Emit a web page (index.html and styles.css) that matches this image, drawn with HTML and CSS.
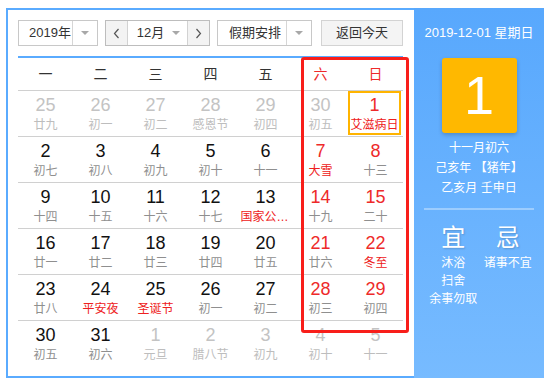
FILE: index.html
```html
<!DOCTYPE html>
<html lang="zh-CN">
<head>
<meta charset="utf-8">
<title>万年历</title>
<link rel="stylesheet" href="styles.css">
</head>
<body>
<div class="cal">
  <div class="main">
    <div class="toolbar">
      <div class="select year"><span class="sel-text">2019年</span><span class="sel-arrow"><i class="tri"></i></span></div>
      <div class="month-group">
        <span class="nav"><svg width="7" height="11" viewBox="0 0 7 11"><polyline points="5.5,1 1.5,5.5 5.5,10" fill="none" stroke="#555" stroke-width="1.2"/></svg></span>
        <span class="month"><span>12月</span><i class="tri"></i></span>
        <span class="nav next"><svg width="7" height="11" viewBox="0 0 7 11"><polyline points="1.5,1 5.5,5.5 1.5,10" fill="none" stroke="#555" stroke-width="1.2"/></svg></span>
      </div>
      <div class="select holiday"><span class="sel-text">假期安排</span><span class="sel-arrow"><i class="tri"></i></span></div>
      <button class="today">返回今天</button>
    </div>
    <div class="grid">
      <div class="head">
        <span>一</span><span>二</span><span>三</span><span>四</span><span>五</span><span class="red">六</span><span class="red">日</span>
      </div>
      <div class="week">
        <div class="day other"><b>25</b><em>廿九</em></div>
        <div class="day other"><b>26</b><em>初一</em></div>
        <div class="day other"><b>27</b><em>初二</em></div>
        <div class="day other"><b>28</b><em>感恩节</em></div>
        <div class="day other"><b>29</b><em>初四</em></div>
        <div class="day other"><b>30</b><em>初五</em></div>
        <div class="day we sel"><b>1</b><em class="fest">艾滋病日</em></div>
      </div>
      <div class="week">
        <div class="day"><b>2</b><em>初七</em></div>
        <div class="day"><b>3</b><em>初八</em></div>
        <div class="day"><b>4</b><em>初九</em></div>
        <div class="day"><b>5</b><em>初十</em></div>
        <div class="day"><b>6</b><em>十一</em></div>
        <div class="day we"><b>7</b><em class="fest">大雪</em></div>
        <div class="day we"><b>8</b><em>十三</em></div>
      </div>
      <div class="week">
        <div class="day"><b>9</b><em>十四</em></div>
        <div class="day"><b>10</b><em>十五</em></div>
        <div class="day"><b>11</b><em>十六</em></div>
        <div class="day"><b>12</b><em>十七</em></div>
        <div class="day"><b>13</b><em class="fest">国家公祭日</em></div>
        <div class="day we"><b>14</b><em>十九</em></div>
        <div class="day we"><b>15</b><em>二十</em></div>
      </div>
      <div class="week">
        <div class="day"><b>16</b><em>廿一</em></div>
        <div class="day"><b>17</b><em>廿二</em></div>
        <div class="day"><b>18</b><em>廿三</em></div>
        <div class="day"><b>19</b><em>廿四</em></div>
        <div class="day"><b>20</b><em>廿五</em></div>
        <div class="day we"><b>21</b><em>廿六</em></div>
        <div class="day we"><b>22</b><em class="fest">冬至</em></div>
      </div>
      <div class="week">
        <div class="day"><b>23</b><em>廿八</em></div>
        <div class="day"><b>24</b><em class="fest">平安夜</em></div>
        <div class="day"><b>25</b><em class="fest">圣诞节</em></div>
        <div class="day"><b>26</b><em>初一</em></div>
        <div class="day"><b>27</b><em>初二</em></div>
        <div class="day we"><b>28</b><em>初三</em></div>
        <div class="day we"><b>29</b><em>初四</em></div>
      </div>
      <div class="week">
        <div class="day"><b>30</b><em>初五</em></div>
        <div class="day"><b>31</b><em>初六</em></div>
        <div class="day other"><b>1</b><em>元旦</em></div>
        <div class="day other"><b>2</b><em>腊八节</em></div>
        <div class="day other"><b>3</b><em>初九</em></div>
        <div class="day other"><b>4</b><em>初十</em></div>
        <div class="day other"><b>5</b><em>十一</em></div>
      </div>
    </div>
    <div class="mark"></div>
  </div>
  <div class="side">
    <div class="date">2019-12-01 星期日</div>
    <div class="big">1</div>
    <div class="lunar">
      <div>十一月初六</div>
      <div>己亥年 【猪年】</div>
      <div>乙亥月 壬申日</div>
    </div>
    <div class="divider"></div>
    <div class="yiji">
      <div class="col">
        <div class="title">宜</div>
        <div>沐浴</div>
        <div>扫舍</div>
        <div class="nowrap">余事勿取</div>
      </div>
      <div class="col">
        <div class="title">忌</div>
        <div class="nowrap">诸事不宜</div>
      </div>
    </div>
  </div>
</div>
</body>
</html>
```

FILE: styles.css
```css
* { box-sizing: border-box; }
html, body { margin: 0; padding: 0; background: #fff; }
body {
  font-family: "Liberation Sans", "Noto Sans CJK SC", sans-serif;
  color: #333;
}
.cal {
  display: flex;
  margin: 8px 0 0 6px;
  width: 538px;
  height: 370px;
}
.main {
  position: relative;
  width: 408px;
  border: 2px solid #5aabff;
  border-right: 0;
  padding: 10px 11px 10px 10px;
  background: #fff;
}
.toolbar {
  display: flex;
  height: 26px;
  font-size: 13px;
  line-height: 24px;
}
.select {
  display: flex;
  border: 1px solid #c8c8c8;
  background: #fff;
}
.year { width: 80px; margin-right: 7px; }
.holiday { width: 95px; margin-right: 9px; }
.sel-text { flex: 1; padding-left: 10px; white-space: nowrap; }
.holiday .sel-text { padding-left: 11px; }
.sel-arrow {
  width: 25px;
  border-left: 1px solid #d6d6d6;
  display: flex;
  align-items: center;
  justify-content: center;
}
.tri {
  display: inline-block;
  width: 0; height: 0;
  border-left: 4px solid transparent;
  border-right: 4px solid transparent;
  border-top: 4px solid #a8a8a8;
}
.month-group {
  display: flex;
  width: 105px;
  margin-right: 7px;
  border: 1px solid #bdbdbd;
}
.nav {
  width: 22px;
  background: #f3f3f3;
  border-right: 1px solid #d2d2d2;
  display: flex;
  align-items: center;
  justify-content: center;
}
.nav.next { border-right: 0; border-left: 1px solid #d2d2d2; }
.month {
  flex: 1;
  display: flex;
  align-items: center;
  justify-content: center;
  gap: 8px;
  padding-left: 2px;
}
.today {
  width: 82px;
  height: 26px;
  padding: 0;
  border: 1px solid #d3d3d3;
  background: #f4f4f4;
  font: inherit;
  color: #333;
  line-height: 24px;
}
.grid {
  margin-top: 10px;
  border-top: 2px solid #5aabff;
}
.head {
  display: grid;
  grid-template-columns: repeat(7, 55px);
  height: 32px;
  line-height: 32px;
  font-size: 14px;
  text-align: center;
  color: #333;
}
.red { color: #ee2a2a; }
.week {
  display: grid;
  grid-template-columns: repeat(7, 55px);
  height: 46px;
  border-top: 1px solid #d0d0d0;
}
.day {
  display: flex;
  flex-direction: column;
  align-items: center;
  padding-top: 4px;
  overflow: hidden;
}
.day b {
  font-weight: normal;
  font-size: 18px;
  line-height: 20px;
  color: #111;
}
.day em {
  font-style: normal;
  font-size: 12px;
  line-height: 16px;
  margin-top: 2px;
  color: #8f8f8f;
  max-width: 50px;
  white-space: nowrap;
  overflow: hidden;
  text-overflow: ellipsis;
}
.day.we b { color: #ee2a2a; }
.day em.fest { color: #ee2020; }
.day.other b { color: #c3c3c3; }
.day.other em { color: #bdbdbd; }
.day.sel {
  border: 2px solid #ffb400;
  margin: 0 2px 1px 0;
  padding-top: 2px;
}
.mark {
  position: absolute;
  left: 293px;
  top: 47px;
  width: 108px;
  height: 276px;
  border: 3px solid #f81e1a;
  border-radius: 3px;
  pointer-events: none;
}
.side {
  width: 130px;
  height: 370px;
  background: linear-gradient(#58a8fd, #77bbff);
  color: #fff;
  text-align: center;
  padding-top: 15px;
}
.date {
  font-size: 13px;
  line-height: 20px;
  white-space: nowrap;
}
.big {
  width: 75px;
  height: 75px;
  margin: 15px auto 0;
  background: #ffb800;
  border-radius: 3px;
  box-shadow: 0 2px 4px rgba(0, 0, 0, 0.2);
  font-size: 54px;
  line-height: 75px;
  color: #fff;
}
.lunar {
  margin-top: 5px;
  font-size: 12px;
  line-height: 20px;
  white-space: nowrap;
}
.divider {
  height: 2px;
  margin: 10px 10px 0;
  background: rgba(255, 255, 255, 0.35);
}
.yiji {
  display: grid;
  grid-template-columns: 1fr 1fr;
  padding: 0 9px 0 12px;
  font-size: 12px;
  line-height: 18px;
}
.col { display: flex; flex-direction: column; align-items: center; }
.title {
  font-size: 24px;
  line-height: 28px;
  margin-top: 14px;
  margin-bottom: 2px;
  text-shadow: 1px 1px 2px rgba(0, 0, 0, 0.18);
}
.nowrap { white-space: nowrap; }
```
